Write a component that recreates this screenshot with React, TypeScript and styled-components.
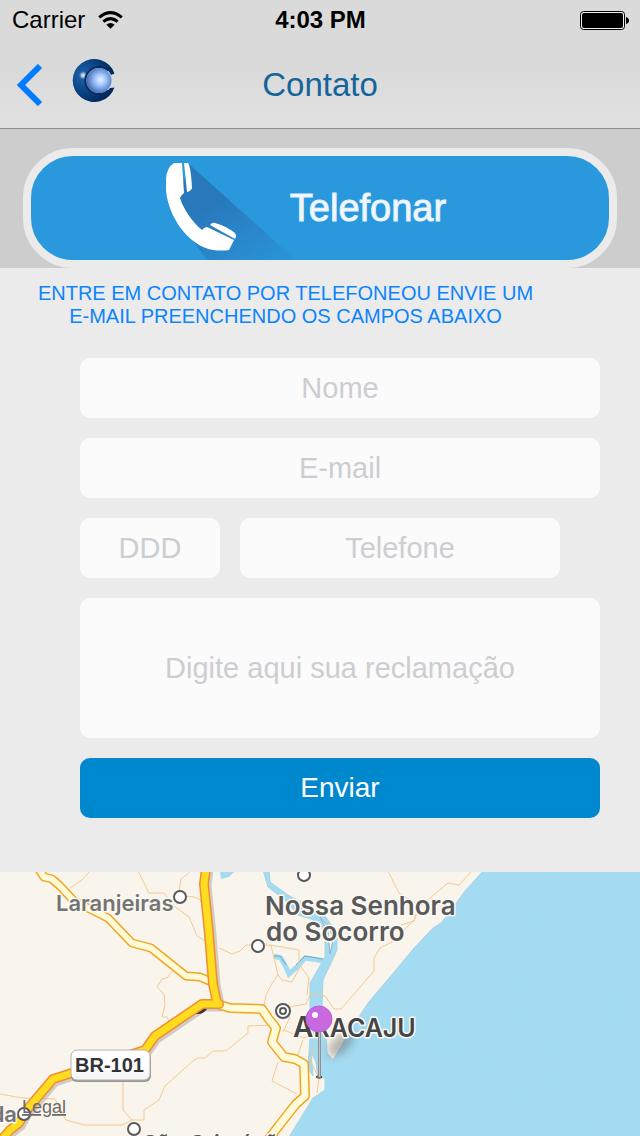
import React from "react";
import styled, { createGlobalStyle } from "styled-components";

const GlobalStyle = createGlobalStyle`
  * { box-sizing: border-box; }
  body {
    margin: 0;
    background: #ebebeb;
    font-family: "Liberation Sans", Arial, sans-serif;
  }
`;

const Page = styled.div`
  min-width: 320px;
`;

const Header = styled.header`
  background: linear-gradient(#dadada 55%, #e1e1e1);
  border-bottom: 1px solid #8e8e8e;
`;

const StatusBar = styled.div`
  display: grid;
  grid-template-columns: 1fr auto 1fr;
  align-items: center;
  height: 40px;
  padding: 0 11px 0 12px;
  font-size: 24px;
  line-height: 40px;
  color: #000;
`;

const Carrier = styled.div`
  display: flex;
  align-items: center;
  gap: 13px;
`;

const Clock = styled.time`
  font-weight: bold;
`;

const BatteryIcon = styled.svg`
  justify-self: end;
`;

const NavBar = styled.nav`
  display: grid;
  grid-template-columns: 1fr auto 1fr;
  align-items: center;
  height: 88px;
  padding: 2px 16px 0;
`;

const NavStart = styled.div`
  display: flex;
  align-items: center;
  gap: 29px;
`;

const BackButton = styled.button`
  display: flex;
  padding: 0;
  border: 0;
  background: none;
`;

const Logo = styled.svg`
  margin-bottom: 8px;
`;

const Title = styled.h1`
  margin: 0;
  font-size: 33px;
  font-weight: normal;
  line-height: 40px;
  color: #14649c;
`;

const CallBar = styled.section`
  padding: 19px 23px 0;
  background: #cdcdcd;
`;

const CallButton = styled.button`
  display: flex;
  align-items: center;
  justify-content: center;
  width: 100%;
  height: 120px;
  padding: 0 28px 0 0;
  overflow: hidden;
  border: 8px solid #ebebeb;
  border-radius: 50px;
  background: #2a98dc;
  color: #f4f8ff;
  font-family: inherit;
  font-size: 38px;
  -webkit-text-stroke: 1px #e4f0fb;
`;

const PhoneIcon = styled.svg`
  flex: none;
  overflow: visible;
`;

const Intro = styled.p`
  margin: 0;
  padding: 14px 69px 0 0;
  font-size: 20px;
  line-height: 23px;
  text-align: center;
  color: #0b84ff;
`;

const Form = styled.form`
  display: flex;
  flex-direction: column;
  gap: 20px;
  padding: 30px 40px 54px 80px;
`;

const PhoneRow = styled.div`
  display: flex;
  gap: 20px;
  padding-right: 40px;
`;

const Field = styled.input<{ $short?: boolean }>`
  flex: ${(p) => (p.$short ? "none" : "1 1 auto")};
  width: ${(p) => (p.$short ? "140px" : "100%")};
  min-width: 0;
  height: 60px;
  padding: 0 12px;
  border: 0;
  border-radius: 10px;
  background: #fbfbfb;
  font-family: inherit;
  font-size: 29px;
  text-align: center;
  color: #333;
  &::placeholder { color: #cdcdd1; opacity: 1; }
`;

const Message = styled.textarea`
  display: block;
  width: 100%;
  height: 140px;
  padding: 54px 12px;
  border: 0;
  border-radius: 10px;
  resize: none;
  background: #fbfbfb;
  font-family: inherit;
  font-size: 29px;
  line-height: 32px;
  text-align: center;
  color: #333;
  &::placeholder { color: #cdcdd1; opacity: 1; }
`;

const Submit = styled.button`
  height: 60px;
  border: 0;
  border-radius: 10px;
  background: #0088cf;
  color: #fff;
  font-family: inherit;
  font-size: 28px;
`;

const MapView = styled.svg`
  display: block;
  width: 100%;
  height: auto;
  overflow: hidden;
`;

const Place = styled.text<{ $size: number; $tone?: string }>`
  font-family: Inter, "Open Sans", sans-serif;
  font-size: ${(p) => p.$size}px;
  font-weight: 600;
  fill: ${(p) => p.$tone || "#58595b"};
  stroke: #fbf8f2;
  stroke-width: 3px;
  stroke-linejoin: round;
  paint-order: stroke;
`;

const Shield = styled.text`
  font-size: 20px;
  font-weight: bold;
  fill: #333;
`;

const Legal = styled.a`
  font-size: 18px;
  fill: #6b6b6b;
  text-decoration: underline;
`;

const lanes = {
  north: "M206 -4 L204 12 L209 62 L213 112 L217 131",
  br: "M-2 272 L10 258 L19 251 L25 240 L53 207 L78 199 L145 178 L155 164 L202 132 L219 132",
  west: "M38 -4 L44 5 L52 7 L60 14 L74 29 L108 46 L132 71 L151 76 L186 104 L200 105 L214 111",
  south:
    "M220 133 L230 136 L262 137 L268 146 L276 156 L272 170 L284 185 L295 187 L304 192 L305 224 L296 232 L281 251 L268 268",
};

const trails = [
  "M90 -1 L82 8 L70 16",
  "M138 -1 L149 21 L164 21 L174 34 L189 45 L197 64 L209 71",
  "M190 0 L181 7 L179 20",
  "M186 24 L194 25 L204 29",
  "M173 98 L167 106 L162 107 L157 115 L164 122 L165 133 L162 145 L167 145 L169 149",
  "M0 222 L22 226 L55 227 L66 248 L84 253 L122 253 L132 248 L123 238 L123 209",
  "M132 248 L144 248 L144 238 L159 228 L165 214 L194 188 L198 186 L205 186 L213 179 L226 179 L248 161 L248 154 L272 153",
  "M200 29 L204 33",
  "M219 76 L232 82 L240 79 L246 73 L270 73 L299 78 L299 92 L309 106 L307 123",
  "M271 73 L278 103 L271 113 L266 123 L264 134",
  "M278 103 L282 108 L292 110 L300 95",
  "M283 136 L306 132 L311 121 L325 124 L334 137 L341 137 L374 99 L374 86 L380 76 L394 69 L410 52 L414 49 L421 27",
  "M388 -1 L399 21 L415 31",
  "M401 53 L414 49 L418 36 L448 11 L459 13 L471 0",
  "M283 160 L290 145 L288 138",
  "M284 158 L304 166 L309 164",
  "M303 168 L297 185",
  "M278 190 L272 209 L297 222",
  "M313 176 L311 190 L319 206 L317 221",
];

const towns = [
  [180, 25],
  [304, 3],
  [258, 74],
  [24, 242],
  [134, 257],
];

function AreaMap() {
  return (
    <MapView viewBox="0 0 640 264" role="img" aria-label="Mapa de Aracaju">
      <defs>
        <filter id="ripple" x="0" y="0" width="100%" height="100%">
          <feTurbulence type="fractalNoise" baseFrequency="0.03 0.13" numOctaves="3" seed="4" />
          <feColorMatrix values="0 0 0 0 0.42  0 0 0 0 0.72  0 0 0 0 0.86  0.9 0 0 0 -0.3" />
          <feComposite in2="SourceGraphic" operator="in" />
        </filter>
        <filter id="soft" x="-50%" y="-80%" width="200%" height="260%">
          <feGaussianBlur stdDeviation="4" />
        </filter>
        <linearGradient id="needle">
          <stop offset="0" stopColor="#77787a" />
          <stop offset="0.5" stopColor="#c2c4c6" />
          <stop offset="1" stopColor="#77787a" />
        </linearGradient>
        <linearGradient id="plate" x2="0" y2="1">
          <stop offset="0.5" stopColor="#fff" />
          <stop offset="1" stopColor="#f3f3f3" />
        </linearGradient>
        <path
          id="sea"
          d="M484 -2 L465 19 L449 41 L441 51 L433 56 L414 76 L400 93 L368 131 L357 148 L333 188 L327 181 L326 160 L322 135 L323 108 L337 78 L337 61 L323 41 L308 34 L288 23 L270 10 L269 -2 L263 -2 L268 15 L285 28 L298 43 L314 48 L325 60 L325 85 L310 111 L310 165 L308 196 L313 204 L311 180 L316 190 L318 206 L325 206 L325 218 L313 226 L286 270 L650 270 L650 -2 Z"
        />
      </defs>
      <rect width="640" height="264" fill="#f9f5ed" />
      <use href="#sea" fill="#a3dbf2" stroke="#a9d3e2" />
      <use href="#sea" fill="#a3dbf2" filter="url(#ripple)" opacity="0.45" />
      <path d="M220 0 H234 L229 5 L221 7 Z" fill="#a3dbf2" />
      <path d="M274 84 L281 86 L286 95 L289 102 L297 95 L305 86 L324 89" fill="none" stroke="#a3dbf2" strokeWidth="5" />
      <path d="M273 84 L280 84 L286 93 M296 93 L305 84 L323 87" fill="none" stroke="#72a9bb" />
      <path d="M320 45 L328 60 L330 82 L333 68 L330 57 Z" fill="#f9f5ed" stroke="#8db5c4" />
      <g fill="none" stroke="#f3ca91">
        {trails.map((d) => (
          <path key={d} d={d} />
        ))}
      </g>
      <g fill="none" strokeLinejoin="round" strokeLinecap="round">
        <path d={lanes.br} stroke="#aaa69f" strokeWidth="9" opacity="0.5" transform="translate(2 3)" />
        <path d={lanes.north} stroke="#aaa69f" strokeWidth="9" opacity="0.5" transform="translate(3 1)" />
        <path d="M195 140 Q201 142 206 136" stroke="#333" strokeWidth="3" />
        <path d={lanes.west} stroke="#f2a51e" strokeWidth="9" />
        <path d={lanes.west} stroke="#fffbd9" strokeWidth="6" />
        <path d={lanes.south} stroke="#f2a51e" strokeWidth="10" />
        <path d={lanes.south} stroke="#fffbd9" strokeWidth="7" />
        <path d={lanes.br} stroke="#f18d32" strokeWidth="10" />
        <path d={lanes.north} stroke="#f18d32" strokeWidth="10" />
        <path d={lanes.br} stroke="#ffdc20" strokeWidth="7" />
        <path d={lanes.north} stroke="#ffdc20" strokeWidth="7" />
      </g>
      <g fill="#fff" stroke="#58595b" strokeWidth="2">
        {towns.map(([x, y]) => (
          <circle key={x} cx={x} cy={y} r="6" />
        ))}
        <circle cx="283" cy="139" r="7" />
        <circle cx="283" cy="139" r="3" />
      </g>
      <Place x="56" y="39" $size={22} $tone="#747474">Laranjeiras</Place>
      <Place x="265" y="43" $size={26}>Nossa Senhora</Place>
      <Place x="266" y="69" $size={26}>do Socorro</Place>
      <Place x="17" y="250" textAnchor="end" $size={22} $tone="#747474">Estrada</Place>
      <Place x="143" y="279" $size={22}>São Cristóvão</Place>
      <ellipse cx="341" cy="172" rx="16" ry="8" fill="#555" opacity="0.4" filter="url(#soft)" transform="rotate(-45 341 172)" />
      <Place x="293" y="165" $size={28} $tone="#444547">
        A<tspan fontSize="25">RACAJU</tspan>
      </Place>
      <ellipse cx="319" cy="205" rx="3" ry="1" fill="none" stroke="#333" strokeWidth="1" />
      <rect x="318" y="158" width="3" height="47" fill="url(#needle)" />
      <circle cx="319" cy="147" r="13" fill="#c869df" stroke="#bb5fd2" />
      <circle cx="315" cy="143" r="3" fill="#fff" />
      <rect x="71" y="180" width="80" height="30" rx="6" fill="#777" opacity="0.75" />
      <rect x="71" y="178" width="79" height="30" rx="6" fill="url(#plate)" stroke="#b5b3b0" />
      <Shield x="75" y="200">BR-101</Shield>
      <Legal href="#legal">
        <text x="22" y="241">Legal</text>
      </Legal>
    </MapView>
  );
}

export default function App() {
  return (
    <Page>
      <GlobalStyle />
      <Header>
        <StatusBar>
          <Carrier>
            Carrier
            <svg width="25" height="18" viewBox="0 0 25 18" aria-hidden="true">
              <g fill="none" stroke="#000" strokeWidth="3">
                <path d="M1.2 6.4 Q12.5 -3.2 23.8 6.4" />
                <path d="M5.3 10.7 Q12.5 4.6 19.7 10.7" />
              </g>
              <path d="M8.4 13.7 Q12.5 10.2 16.6 13.7 L12.5 17.8 Z" />
            </svg>
          </Carrier>
          <Clock>4:03 PM</Clock>
          <BatteryIcon width="49" height="19" viewBox="0 0 49 19" aria-hidden="true">
            <rect x="0.5" y="0.5" width="44" height="18" rx="3" fill="#f0f0f0" stroke="#000" />
            <rect x="2" y="2" width="41" height="15" rx="2" />
            <path d="M46 6 Q49 7 49 9.500 Q49 12 46 13 Z" />
          </BatteryIcon>
        </StatusBar>
        <NavBar>
          <NavStart>
            <BackButton type="button" aria-label="Voltar">
              <svg width="27" height="42" viewBox="0 0 27 42" fill="none" stroke="#007aff" strokeWidth="6">
                <path d="M24 2 L5 21 L24 40" />
              </svg>
            </BackButton>
            <Logo width="45" height="44" viewBox="0 0 45 44" aria-hidden="true">
              <defs>
                <radialGradient id="shell" cx="0.25" cy="0.38" r="0.7">
                  <stop offset="0" stopColor="#fff" />
                  <stop offset="0.04" stopColor="#b9cfe8" />
                  <stop offset="0.14" stopColor="#1c5ba0" />
                  <stop offset="0.5" stopColor="#0a4687" />
                  <stop offset="1" stopColor="#032a5c" />
                </radialGradient>
                <radialGradient id="core" cx="0.56" cy="0.47" r="0.58">
                  <stop offset="0" stopColor="#e6f5ff" />
                  <stop offset="0.35" stopColor="#a6caff" />
                  <stop offset="0.8" stopColor="#5a83cc" />
                  <stop offset="1" stopColor="#3c5f9f" />
                </radialGradient>
              </defs>
              <path
                d="M42.500 14.500 A21.500 21.500 0 1 0 42.500 28.500 L38 29 A13.500 13.500 0 1 1 38 14 L39 16 Z"
                fill="url(#shell)"
              />
              <path d="M36 31.500 A13.500 13.500 0 1 1 36 11.500" fill="none" stroke="#052c60" strokeWidth="2" />
              <circle cx="27" cy="21.500" r="12.500" fill="url(#core)" />
            </Logo>
          </NavStart>
          <Title>Contato</Title>
        </NavBar>
      </Header>
      <main>
        <CallBar>
          <CallButton type="button">
            <PhoneIcon width="124" height="104" viewBox="0 0 124 104" aria-hidden="true">
              <defs>
                <linearGradient id="shade" x1="0.1" y1="0.1" x2="0.8" y2="1">
                  <stop offset="0.3" stopColor="#2878bb" />
                  <stop offset="1" stopColor="#2a92d5" />
                </linearGradient>
              </defs>
              <path d="M24 9 L130 104 H41 L26 84 L12 40 Z" fill="url(#shade)" />
              <g fill="#fff">
                <path d="M16 7 H8 Q1 11 0 23 V34 C2 60 22 90 47 94 Q56 95 63 94 L68 84 L41 71 Q38 71 36 74 C26 66 17 52 14 42 Q15 39 18 37 Z" />
                <path d="M18 7 H22 Q25 12 26 32 Q25 35 21 36 Z" />
                <path d="M44 69 Q46 66 49 67 Q60 70 69 77 Q71 80 69 83 Z" />
              </g>
            </PhoneIcon>
            Telefonar
          </CallButton>
        </CallBar>
        <Intro>
          ENTRE EM CONTATO POR TELEFONEOU ENVIE UM
          <br />
          E-MAIL PREENCHENDO OS CAMPOS ABAIXO
        </Intro>
        <Form>
          <Field type="text" placeholder="Nome" aria-label="Nome" />
          <Field type="email" placeholder="E-mail" aria-label="E-mail" />
          <PhoneRow>
            <Field $short type="tel" placeholder="DDD" aria-label="DDD" />
            <Field type="tel" placeholder="Telefone" aria-label="Telefone" />
          </PhoneRow>
          <Message placeholder="Digite aqui sua reclamação" aria-label="Digite aqui sua reclamação" />
          <Submit type="submit">Enviar</Submit>
        </Form>
        <AreaMap />
      </main>
    </Page>
  );
}
